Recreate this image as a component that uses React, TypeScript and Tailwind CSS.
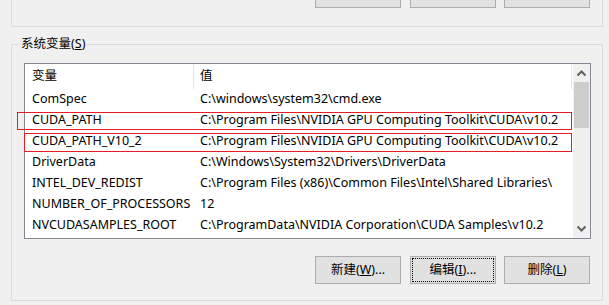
import React from "react";

const FONT = { fontFamily: '"Noto Sans", "Noto Sans CJK SC", sans-serif' };

const rows: [string, string][] = [
  ["ComSpec", "C:\\windows\\system32\\cmd.exe"],
  ["CUDA_PATH", "C:\\Program Files\\NVIDIA GPU Computing Toolkit\\CUDA\\v10.2"],
  ["CUDA_PATH_V10_2", "C:\\Program Files\\NVIDIA GPU Computing Toolkit\\CUDA\\v10.2"],
  ["DriverData", "C:\\Windows\\System32\\Drivers\\DriverData"],
  ["INTEL_DEV_REDIST", "C:\\Program Files (x86)\\Common Files\\Intel\\Shared Libraries\\"],
  ["NUMBER_OF_PROCESSORS", "12"],
  ["NVCUDASAMPLES_ROOT", "C:\\ProgramData\\NVIDIA Corporation\\CUDA Samples\\v10.2"],
];

function Btn({ children, focus, className = "" }: { children: React.ReactNode; focus?: boolean; className?: string }) {
  return (
    <div className={`relative w-[86px] h-[28px] bg-[#e1e1e1] border border-[#adadad] flex items-center justify-center text-[12.5px] text-black ${className}`}>
      {focus && <div className="absolute inset-[1px] border border-dotted border-black" />}
      <span>{children}</span>
    </div>
  );
}

export default function App() {
  return (
    <div className="relative w-[609px] h-[305px] bg-[#f0f0f0] overflow-hidden text-black flex flex-col" style={FONT}>
      {/* top group (user variables) remainder */}
      <div className="ml-[11px] w-[592px] h-[27px] border-x border-b border-[#dcdcdc] flex items-start">
        <div className="flex mt-[-20px] ml-[303px]">
          <Btn>新建(<u>N</u>)...</Btn>
          <Btn className="ml-[9px]">编辑(<u>E</u>)...</Btn>
          <Btn className="ml-[8px]">删除(<u>D</u>)</Btn>
        </div>
      </div>

      {/* system variables group */}
      <div className="relative mt-[17px] ml-[11px] w-[592px] h-[257px] border border-[#dcdcdc] shrink-0">
        <span className="absolute top-[-11px] left-[7px] px-[2px] bg-[#f0f0f0] text-[12.5px] leading-[20px]">
          系统变量(<u>S</u>)
        </span>

        <div className="ml-[12px] mt-[18px] w-[567px] h-[176px] border border-[#828790] bg-white flex">
          <div className="w-[548px] flex flex-col text-[12.5px]">
            <div className="flex h-[25px] items-center">
              <div className="w-[169px] h-full pl-[7px] flex items-center border-r border-[#e5e5e5]">变量</div>
              <div className="w-[378px] h-full pl-[6px] flex items-center border-r border-[#e5e5e5]">值</div>
            </div>
            {rows.map(([k, v]) => (
              <div key={k} className="flex h-[21px] items-center whitespace-nowrap">
                <div className="w-[170px] pl-[7px] overflow-hidden">{k}</div>
                <div className="pl-[5px]">{v}</div>
              </div>
            ))}
          </div>
          <div className="w-[17px] bg-[#f0f0f0] flex flex-col items-center">
            <svg width="17" height="17" viewBox="0 0 17 17" className="mt-[1px]">
              <path d="M4.5 10.5 L8.5 6.5 L12.5 10.5" fill="none" stroke="#606060" strokeWidth="2" />
            </svg>
            <div className="w-[15px] h-[46px] bg-[#cdcdcd]" />
            <div className="flex-1" />
            <svg width="17" height="17" viewBox="0 0 17 17" className="mb-[1px]">
              <path d="M4.5 6.5 L8.5 10.5 L12.5 6.5" fill="none" stroke="#606060" strokeWidth="2" />
            </svg>
          </div>
        </div>

        <div className="flex mt-[17px] ml-[303px]">
          <Btn>新建(<u>W</u>)...</Btn>
          <Btn className="ml-[9px]" focus>编辑(<u>I</u>)...</Btn>
          <Btn className="ml-[8px]">删除(<u>L</u>)</Btn>
        </div>
      </div>

      {/* red annotation boxes */}
      <div className="absolute left-[17px] top-[112px] w-[555px] h-[18px] border border-[#e81c24]" />
      <div className="absolute left-[24px] top-[133px] w-[548px] h-[19px] border border-[#e81c24]" />
    </div>
  );
}
